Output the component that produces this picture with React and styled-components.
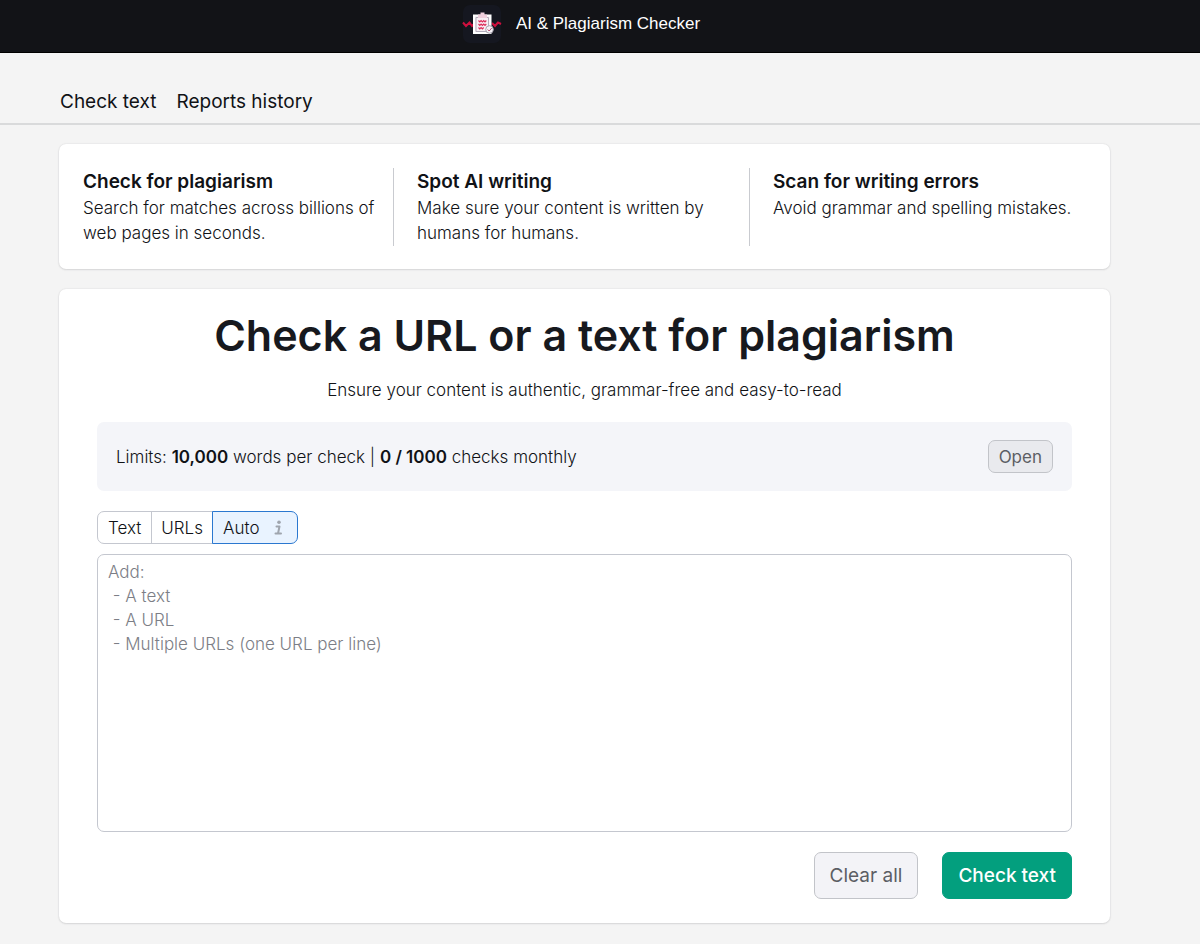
import React, { useState } from "react";
import styled, { createGlobalStyle } from "styled-components";

const features = [
  {
    title: "Check for plagiarism",
    text: "Search for matches across billions of web pages in seconds.",
  },
  {
    title: "Spot AI writing",
    text: "Make sure your content is written by humans for humans.",
  },
  {
    title: "Scan for writing errors",
    text: "Avoid grammar and spelling mistakes.",
  },
];

const modes = ["Text", "URLs", "Auto"];

const placeholder =
  "Add:\n - A text\n - A URL\n - Multiple URLs (one URL per line)";

const Logo = () => (
  <svg width="40" height="40" viewBox="0 0 40 40" aria-hidden="true">
    <rect x="1" y="1" width="38" height="38" rx="7" fill="#151720" />
    <path
      d="M1 18.500l3 3.500 3.500-3.500 2.500 3.500 1.500-1.500M30 19l3 3 3-3.500 3 1.500"
      fill="none"
      stroke="#cf0f3d"
      strokeWidth="2"
    />
    <path d="M12 11.500h16.500v17.500H12z" fill="#f3eaf0" stroke="#ffffff" strokeWidth="2" />
    <path d="M14 13.500h12.500v14H14z" fill="#f8eff4" stroke="#b3adbb" />
    <path d="M16 10.500h2.500V8.500h4v2H25V14h-9z" fill="#f0cfdd" />
    <path
      d="M16.500 16.500l1.300 1.300 1.300-1.300 1.300 1.300 1.300-1.300 1.300 1.300 1.300-1.300M16.500 20l1.300 1.300 1.300-1.300 1.300 1.300 1.300-1.300 1.300 1.300 1.300-1.300M16.500 23.500l1.300 1.300 1.300-1.300 1.300 1.300 1.300-1.300"
      fill="none"
      stroke="#dc2a58"
      strokeWidth="1.200"
    />
    <circle cx="27.500" cy="25.500" r="3.800" fill="#f5f2f6" stroke="#a8a3b0" />
    <path d="M25.700 25.500l1.500 1.500 2.500-3" fill="none" stroke="#b0486a" />
  </svg>
);

const InfoIcon = () => (
  <svg width="16" height="16" viewBox="-3 0 16 16" aria-hidden="true">
    <circle cx="5" cy="2.300" r="1.800" fill="#9fa5ae" />
    <path
      d="M2.500 6.500H5.500L4 13.500M1.500 13.500H7"
      fill="none"
      stroke="#9fa5ae"
      strokeWidth="2"
      strokeLinecap="round"
      strokeLinejoin="round"
    />
  </svg>
);

export default function App() {
  const [mode, setMode] = useState("Auto");
  const [value, setValue] = useState("");

  return (
    <>
      <GlobalStyle />
      <Header>
        <Logo />
        <HeaderTitle>AI &amp; Plagiarism Checker</HeaderTitle>
      </Header>
      <Nav>
        <NavLink href="#check">Check text</NavLink>
        <NavLink href="#history">Reports history</NavLink>
      </Nav>
      <Main>
        <FeatureCard>
          {features.map((feature) => (
            <Feature key={feature.title}>
              <FeatureTitle>{feature.title}</FeatureTitle>
              <FeatureText>{feature.text}</FeatureText>
            </Feature>
          ))}
        </FeatureCard>
        <CheckCard>
          <Title>Check a URL or a text for plagiarism</Title>
          <Subtitle>
            Ensure your content is authentic, grammar-free and easy-to-read
          </Subtitle>
          <Limits>
            <span>
              Limits: <b>10,000</b> words per check | <b>0 / 1000</b> checks
              monthly
            </span>
            <Button>Open</Button>
          </Limits>
          <Modes role="group" aria-label="Input type">
            {modes.map((name) => (
              <ModeButton
                key={name}
                $active={mode === name}
                aria-pressed={mode === name}
                onClick={() => setMode(name)}
              >
                {name}
                {name === "Auto" && <InfoIcon />}
              </ModeButton>
            ))}
          </Modes>
          <TextArea
            aria-label="Text or URLs to check"
            placeholder={placeholder}
            value={value}
            onChange={(e) => setValue(e.target.value)}
          />
          <Actions>
            <Button $large onClick={() => setValue("")}>
              Clear all
            </Button>
            <Button $large $primary>
              Check text
            </Button>
          </Actions>
        </CheckCard>
      </Main>
    </>
  );
}

const GlobalStyle = createGlobalStyle`
  * {
    box-sizing: border-box;
  }

  body {
    margin: 0;
    background: #f4f4f4;
    color: #101216;
    font-family: Inter, sans-serif;
    font-size: 17px;
    font-weight: 300;
    line-height: 24px;
  }

  button,
  textarea {
    font: inherit;
  }

  h1,
  h2,
  p {
    margin: 0;
  }
`;

const Header = styled.header`
  display: flex;
  align-items: center;
  justify-content: center;
  gap: 14px;
  height: 53px;
  padding: 0 38px 5px 0;
  background: #121317;
  border-bottom: 1px solid #000000;
`;

const HeaderTitle = styled.span`
  font-family: "Liberation Sans", Arial, sans-serif;
  font-size: 17px;
  font-weight: 400;
  color: #ffffff;
`;

const Nav = styled.nav`
  display: flex;
  gap: 20px;
  padding: 35px 60px 7px;
  border-bottom: 2px solid #d9dadb;
`;

const NavLink = styled.a`
  font-size: 19px;
  font-weight: 400;
  line-height: 28px;
  color: inherit;
  text-decoration: none;
`;

const Main = styled.main`
  display: flex;
  flex-direction: column;
  gap: 20px;
  padding: 19px 90px 20px 59px;
`;

const Card = styled.section`
  background: #ffffff;
  border-radius: 7px;
  box-shadow: 0 0 2px rgba(25, 27, 35, 0.12), 0 1px 2px rgba(25, 27, 35, 0.1);
`;

const FeatureCard = styled(Card)`
  display: grid;
  grid-template-columns: 310fr 356fr 337fr;
  padding: 24px 24px 23px;
`;

const Feature = styled.div`
  padding: 0 12px 0 23px;

  &:first-child {
    padding-left: 0;
  }

  &:last-child {
    padding-right: 0;
  }

  & + & {
    border-left: 1px solid #c9cbd0;
  }
`;

const FeatureTitle = styled.h2`
  font-size: 19px;
  font-weight: 600;
  line-height: 28px;
`;

const FeatureText = styled.p`
  line-height: 25px;
`;

const CheckCard = styled(Card)`
  padding: 19px 38px 24px;
`;

const Title = styled.h1`
  font-size: 43px;
  font-weight: 600;
  line-height: 54px;
  text-align: center;
  color: #17191e;
`;

const Subtitle = styled.p`
  margin: 16px 0 20px;
  text-align: center;
`;

const Limits = styled.div`
  display: flex;
  align-items: center;
  justify-content: space-between;
  height: 69px;
  margin-bottom: 20px;
  padding: 0 19px;
  background: #f4f5f9;
  border-radius: 7px;

  b {
    font-weight: 600;
  }
`;

const Button = styled.button`
  height: ${({ $large }) => ($large ? "47px" : "33px")};
  padding: ${({ $large }) => ($large ? "0 15px" : "0 10px")};
  font-size: ${({ $large }) => ($large ? "19px" : "17px")};
  font-weight: ${({ $primary }) => ($primary ? 500 : 400)};
  color: ${({ $primary }) => ($primary ? "#ffffff" : "#5c5e64")};
  background: ${({ $primary, $large }) =>
    $primary ? "#039f7e" : $large ? "#f3f3f7" : "#e9eaee"};
  border: 1px solid ${({ $primary }) => ($primary ? "#039f7e" : "#c2c4c9")};
  border-radius: 7px;
  cursor: pointer;
`;

const Modes = styled.div`
  display: flex;
  margin-bottom: 10px;
`;

const ModeButton = styled.button`
  display: flex;
  align-items: center;
  gap: 12px;
  height: 33px;
  padding: 0 10px;
  color: inherit;
  background: ${({ $active }) => ($active ? "#e9f3ff" : "#ffffff")};
  border: 1px solid ${({ $active }) => ($active ? "#2b78d0" : "#c4c7cf")};
  cursor: pointer;

  & + & {
    margin-left: -1px;
  }

  &:nth-child(2) {
    padding: 0 9px;
  }

  &:first-child {
    border-radius: 7px 0 0 7px;
  }

  &:last-child {
    border-radius: 0 7px 7px 0;
  }
`;

const TextArea = styled.textarea`
  display: block;
  width: 100%;
  height: 278px;
  padding: 5px 10px;
  color: inherit;
  background: #ffffff;
  border: 1px solid #c4c7cf;
  border-radius: 7px;
  resize: none;

  &::placeholder {
    color: #7c7e86;
  }
`;

const Actions = styled.div`
  display: flex;
  justify-content: flex-end;
  gap: 24px;
  margin-top: 20px;
`;
